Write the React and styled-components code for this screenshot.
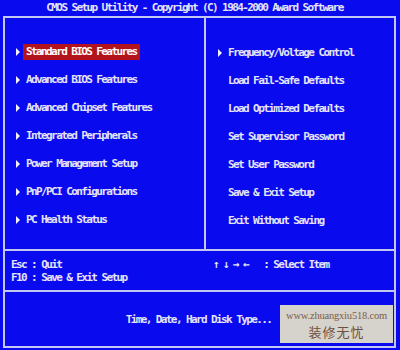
import styled, { createGlobalStyle } from "styled-components";

const Global = createGlobalStyle`
	html, body {
		margin: 0;
		padding: 0;
		background: #0a0aee;
	}
`;

const Screen = styled.div`
	position: relative;
	width: 400px;
	height: 350px;
	background: #0a0aee;
	color: #e4e4f6;
	font-family: "DejaVu Sans Mono", "Liberation Mono", monospace;
	font-weight: bold;
	font-size: 11px;
	letter-spacing: -1.6px;
	box-sizing: border-box;
	padding: 0 4px 0 3px;
	overflow: hidden;
`;

const Title = styled.div`
	height: 16px;
	line-height: 16px;
	text-align: center;
	padding-right: 10px;
	white-space: pre;
`;

const Frame = styled.div`
	border: 2px solid #c4c6f2;
	height: 332px;
	box-sizing: border-box;
	display: flex;
	flex-direction: column;
`;

const Menu = styled.div`
	display: grid;
	grid-template-columns: 201px 1fr;
	height: 231px;
	border-bottom: 2px solid #c4c6f2;
`;

const Column = styled.div`
	display: flex;
	flex-direction: column;
	padding-top: ${(p) => p.$top}px;
	padding-left: ${(p) => p.$left}px;
	border-right: ${(p) => (p.$divider ? "2px solid #c4c6f2" : "none")};
`;

const Item = styled.div`
	height: 28px;
	display: flex;
	align-items: center;
	white-space: pre;
`;

const Arrow = styled.span`
	width: 0;
	height: 0;
	border-top: 4px solid transparent;
	border-bottom: 4px solid transparent;
	border-left: 4px solid #f2f2ff;
	margin-right: 3px;
	visibility: ${(p) => (p.$show ? "visible" : "hidden")};
`;

const Label = styled.span`
	padding: 1px 3px 2px;
	background: ${(p) => (p.$active ? "#b3141c" : "transparent")};
	color: ${(p) => (p.$active ? "#ffffff" : "inherit")};
`;

const Help = styled.div`
	display: grid;
	grid-template-columns: 202px 1fr;
	padding: 7px 0 0 6px;
	height: 41px;
	box-sizing: border-box;
	border-bottom: 2px solid #c4c6f2;
	line-height: 13px;
	white-space: pre;
`;

const Status = styled.div`
	flex: 1;
	display: flex;
	align-items: center;
	justify-content: center;
	padding-right: 2px;
	white-space: pre;
`;

const Watermark = styled.div`
	position: absolute;
	left: 280px;
	top: 305px;
	width: 113px;
	height: 38px;
	background: #d6d3cd;
	color: #7a5d48;
	font-family: "Liberation Serif", "Noto Sans CJK SC", serif;
	font-weight: normal;
	letter-spacing: 0;
	display: flex;
	flex-direction: column;
	align-items: center;
	justify-content: center;
	line-height: 16px;
`;

const Site = styled.div`
	font-size: 10.5px;
	letter-spacing: -0.2px;
`;

const Slogan = styled.div`
	font-family: "Noto Sans CJK SC", serif;
	font-size: 13px;
	letter-spacing: 1px;
	color: #6e5040;
`;

const left = [
	"Standard BIOS Features",
	"Advanced BIOS Features",
	"Advanced Chipset Features",
	"Integrated Peripherals",
	"Power Management Setup",
	"PnP/PCI Configurations",
	"PC Health Status",
];

const right = [
	["Frequency/Voltage Control", true],
	["Load Fail-Safe Defaults", false],
	["Load Optimized Defaults", false],
	["Set Supervisor Password", false],
	["Set User Password", false],
	["Save & Exit Setup", false],
	["Exit Without Saving", false],
];

const App = () => {
	return (
		<Screen>
			<Global />
			<Title>CMOS Setup Utility - Copyright (C) 1984-2000 Award Software</Title>
			<Frame>
				<Menu>
					<Column $top={20} $left={11} $divider>
						{left.map((name, i) => (
							<Item key={name}>
								<Arrow $show />
								<Label $active={i === 0}>{name}</Label>
							</Item>
						))}
					</Column>
					<Column $top={21} $left={12}>
						{right.map(([name, arrow]) => (
							<Item key={name}>
								<Arrow $show={arrow} />
								<Label>{name}</Label>
							</Item>
						))}
					</Column>
				</Menu>
				<Help>
					<div>
						<div>Esc : Quit</div>
						<div>F10 : Save &amp; Exit Setup</div>
					</div>
					<div>↑ ↓ → ←   : Select Item</div>
				</Help>
				<Status>Time, Date, Hard Disk Type...</Status>
			</Frame>
			<Watermark>
				<Site>www.zhuangxiu518.com</Site>
				<Slogan>装修无忧</Slogan>
			</Watermark>
		</Screen>
	);
};

export default App;
